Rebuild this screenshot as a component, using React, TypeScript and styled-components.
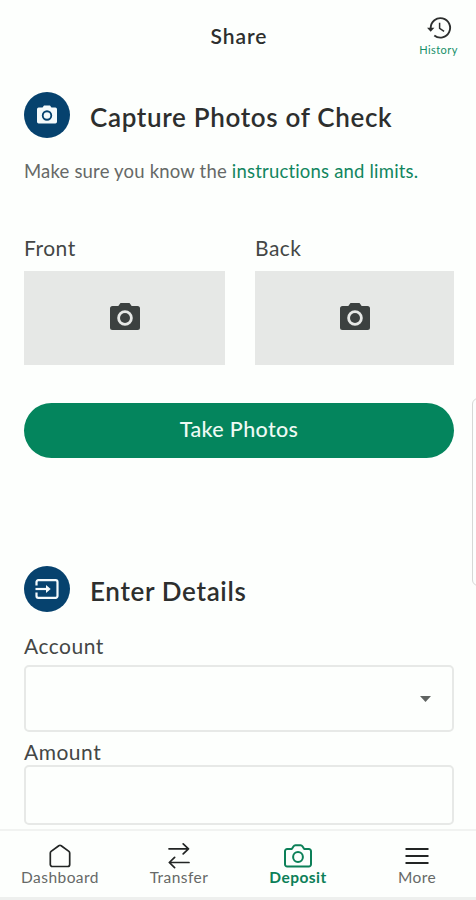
import React from "react";
import styled, { createGlobalStyle } from "styled-components";

const GlobalStyle = createGlobalStyle`
  * { box-sizing: border-box; }
  body { margin: 0; background: #fdfffd; font-family: Lato, sans-serif; color: #2d2f2e; }
  button { font-family: inherit; color: inherit; background: none; border: 0; padding: 0; }
  svg { display: block; flex: none; }
`;

const Screen = styled.div`
  position: relative;
  width: 476px;
  height: 900px;
  overflow: hidden;
  display: flex;
  flex-direction: column;
  background: #fdfffd;
`;

const Header = styled.header`
  height: 72px;
  flex: none;
  display: grid;
  grid-template-columns: 76px 1fr 76px;
`;

const Title = styled.h1`
  grid-column: 2;
  margin: 0;
  text-align: center;
  font-size: 21px;
  font-weight: 600;
  line-height: 72px;
  letter-spacing: 0.95px;
  padding-left: 2px;
`;

const HistoryButton = styled.button`
  display: flex;
  flex-direction: column;
  align-items: center;
  padding: 15px 0 0 1px;
  color: #2d2f2e;
`;

const HistoryLabel = styled.span`
  margin-top: 2px;
  color: #159069;
  font-size: 11px;
  line-height: 13px;
  letter-spacing: 0.45px;
`;

const Content = styled.main`
  flex: 1;
  min-height: 0;
  padding: 0 22px 0 24px;
  display: flex;
  flex-direction: column;
`;

const SectionHead = styled.div<{ $top: number }>`
  display: flex;
  align-items: center;
  gap: 20px;
  height: 46px;
  flex: none;
  margin-top: ${(p) => p.$top}px;
`;

const Badge = styled.span<{ $lift?: number }>`
  width: 46px;
  height: 46px;
  flex: none;
  border-radius: 50%;
  background: #06426e;
  color: #f4fafc;
  display: flex;
  align-items: center;
  justify-content: center;
  padding-bottom: ${(p) => p.$lift ?? 0}px;
`;

const SectionTitle = styled.h2`
  margin: 0;
  padding-top: 3px;
  font-size: 26px;
  line-height: 32px;
  font-weight: 600;
  letter-spacing: 0.67px;
  white-space: nowrap;
`;

const Hint = styled.p`
  margin: 21px 0 0;
  font-size: 18.5px;
  line-height: 24px;
  letter-spacing: 0.19px;
  color: #666967;
  white-space: nowrap;
`;

const HintLink = styled.a`
  color: #11865f;
`;

const Photos = styled.div`
  display: grid;
  grid-template-columns: 201px 199px;
  column-gap: 30px;
  margin-top: 52px;
`;

const Label = styled.div<{ $gap?: number }>`
  height: 26px;
  flex: none;
  margin-top: ${(p) => p.$gap ?? 0}px;
  font-size: 21px;
  line-height: 26px;
  letter-spacing: 0.5px;
  color: #444746;
`;

const PhotoTile = styled.button`
  display: flex;
  width: 100%;
  height: 94px;
  margin-top: 10px;
  padding-bottom: 3px;
  align-items: center;
  justify-content: center;
  background: #e6e8e6;
  color: #3c4140;
`;

const PrimaryButton = styled.button`
  margin-top: 38px;
  height: 55px;
  flex: none;
  border-radius: 28px;
  background: #04855d;
  color: #eefaf4;
  font-size: 21.5px;
  font-weight: 500;
  line-height: 53px;
  padding-bottom: 2px;
  letter-spacing: 0.35px;
`;

const Field = styled.div<{ $top: number; $height: number }>`
  margin-top: ${(p) => p.$top}px;
  height: ${(p) => p.$height}px;
  flex: none;
  border: 2px solid #e7e9e7;
  border-radius: 5px;
  display: flex;
  align-items: center;
  justify-content: flex-end;
  padding-right: 21px;
  color: #606462;
`;

const TabBar = styled.nav`
  height: 71px;
  flex: none;
  display: grid;
  grid-template-columns: repeat(4, 119px);
  border-top: 2px solid #f1f3f1;
  border-bottom: 3px solid #eef0ee;
`;

const Tab = styled.button<{ $active?: boolean }>`
  display: flex;
  flex-direction: column;
  align-items: center;
  padding: 12px 0 0 1px;
  color: ${(p) => (p.$active ? "#0c8058" : "#222524")};
`;

const TabLabel = styled.span<{ $active?: boolean }>`
  margin-top: -1px;
  font-size: 15.5px;
  line-height: 18px;
  letter-spacing: 0.45px;
  font-weight: ${(p) => (p.$active ? 700 : 400)};
  color: ${(p) => (p.$active ? "#0c8058" : "#666967")};
`;

/* Edge panel peeking in over the right side of the page */
const EdgePanel = styled.aside`
  position: absolute;
  left: 472px;
  top: 398px;
  width: 12px;
  height: 188px;
  border: 1px solid #d6d8d6;
  border-radius: 6px;
  background: #fdfefd;
`;

const FilledCamera = ({ width, height }: { width: number; height: number }) => (
  <svg width={width} height={height} viewBox="0 0 30 27" fill="currentColor">
    <path
      fillRule="evenodd"
      d="M10.5 0h9l2.2 3H27.500a2.500 2.500 0 0 1 2.500 2.500v19a2.500 2.500 0 0 1-2.500 2.500H2.500a2.500 2.500 0 0 1-2.500-2.500v-19A2.500 2.500 0 0 1 2.500 3h5.800zM15 7.200a7.800 7.800 0 1 0 0 15.600 7.800 7.800 0 0 0 0-15.600z"
    />
    <circle cx="15" cy="15" r="5" />
  </svg>
);

const HistoryIcon = () => (
  <svg width="26" height="26" viewBox="0 0 26 26" fill="none" stroke="currentColor" strokeWidth="1.900">
    <path d="M4.700 14v-1.200a9.700 9.700 0 1 1 3.600 7.600" />
    <path d="M1 12.700h7.400l-3.700 4z" fill="currentColor" stroke="none" />
    <path d="M13.600 7.700v5.600l4.500 3" strokeWidth="1.500" />
  </svg>
);

const EnterIcon = () => (
  <svg width="24" height="20" viewBox="0 0 24 20" fill="none" stroke="currentColor" strokeWidth="2.200">
    <path d="M1.500 6.600V3a1.800 1.800 0 0 1 1.800-1.800h17.400A1.800 1.800 0 0 1 22.500 3v14a1.800 1.800 0 0 1-1.800 1.800H3.300A1.800 1.800 0 0 1 1.500 17v-3.400" />
    <path d="M.5 10H12" />
    <path d="M11 6l4.700 4-4.700 4z" fill="currentColor" stroke="none" />
  </svg>
);

const Caret = () => (
  <svg width="11" height="6" viewBox="0 0 11 6" fill="currentColor">
    <path d="M0 0h11L5.500 6z" />
  </svg>
);

const HomeIcon = () => (
  <svg width="24" height="26" viewBox="0 0 24 26" fill="none" stroke="currentColor" strokeWidth="1.700" strokeLinejoin="round">
    <path d="M2.300 10a2 2 0 0 1 .8-1.600l7.700-5.700a2 2 0 0 1 2.400 0l7.700 5.700a2 2 0 0 1 .8 1.600v11.500a2 2 0 0 1-2 2H4.300a2 2 0 0 1-2-2z" />
  </svg>
);

const TransferIcon = () => (
  <svg width="24" height="26" viewBox="0 0 24 26" fill="none" stroke="currentColor" strokeWidth="1.700" strokeLinecap="round" strokeLinejoin="round">
    <path d="M2 5.800h19.500M16.200.9l5.300 4.900-5.300 5.100M22 19.500H2.500M7.600 14.400l-5.300 5.100 5.300 5.100" />
  </svg>
);

const DepositIcon = () => (
  <svg width="30" height="26" viewBox="0 0 30 26" fill="none" stroke="currentColor" strokeWidth="2" strokeLinejoin="round">
    <path d="M4.200 6h4.600l1.800-2.800a2.200 2.200 0 0 1 1.800-1h5.200a2.200 2.200 0 0 1 1.800 1L21.200 6h4.600a2.200 2.200 0 0 1 2.200 2.200v13.100a2.200 2.200 0 0 1-2.200 2.200H4.200A2.200 2.200 0 0 1 2 21.300V8.200A2.200 2.200 0 0 1 4.200 6z" />
    <circle cx="15" cy="14" r="4.900" />
  </svg>
);

const MenuIcon = () => (
  <svg width="24" height="26" viewBox="0 0 24 26" fill="none" stroke="currentColor" strokeWidth="2">
    <path d="M.5 6h23M.5 13h23M.5 20h23" />
  </svg>
);

const tabs = [
  { label: "Dashboard", Icon: HomeIcon },
  { label: "Transfer", Icon: TransferIcon },
  { label: "Deposit", Icon: DepositIcon, active: true },
  { label: "More", Icon: MenuIcon },
];

export default function App() {
  return (
    <Screen>
      <GlobalStyle />
      <Header>
        <Title>Share</Title>
        <HistoryButton>
          <HistoryIcon />
          <HistoryLabel>History</HistoryLabel>
        </HistoryButton>
      </Header>
      <Content>
        <SectionHead $top={20}>
          <Badge $lift={2}>
            <FilledCamera width={20} height={19} />
          </Badge>
          <SectionTitle>Capture Photos of Check</SectionTitle>
        </SectionHead>
        <Hint>
          Make sure you know the <HintLink>instructions and limits.</HintLink>
        </Hint>
        <Photos>
          {["Front", "Back"].map((side) => (
            <div key={side}>
              <Label>{side}</Label>
              <PhotoTile aria-label={side}>
                <FilledCamera width={30} height={27} />
              </PhotoTile>
            </div>
          ))}
        </Photos>
        <PrimaryButton>Take Photos</PrimaryButton>
        <SectionHead $top={108}>
          <Badge>
            <EnterIcon />
          </Badge>
          <SectionTitle>Enter Details</SectionTitle>
        </SectionHead>
        <Label $gap={21}>Account</Label>
        <Field $top={6} $height={67}>
          <Caret />
        </Field>
        <Label $gap={7}>Amount</Label>
        <Field $top={0} $height={60} />
      </Content>
      <TabBar>
        {tabs.map(({ label, Icon, active }) => (
          <Tab key={label} $active={active}>
            <Icon />
            <TabLabel $active={active}>{label}</TabLabel>
          </Tab>
        ))}
      </TabBar>
      <EdgePanel />
    </Screen>
  );
}
